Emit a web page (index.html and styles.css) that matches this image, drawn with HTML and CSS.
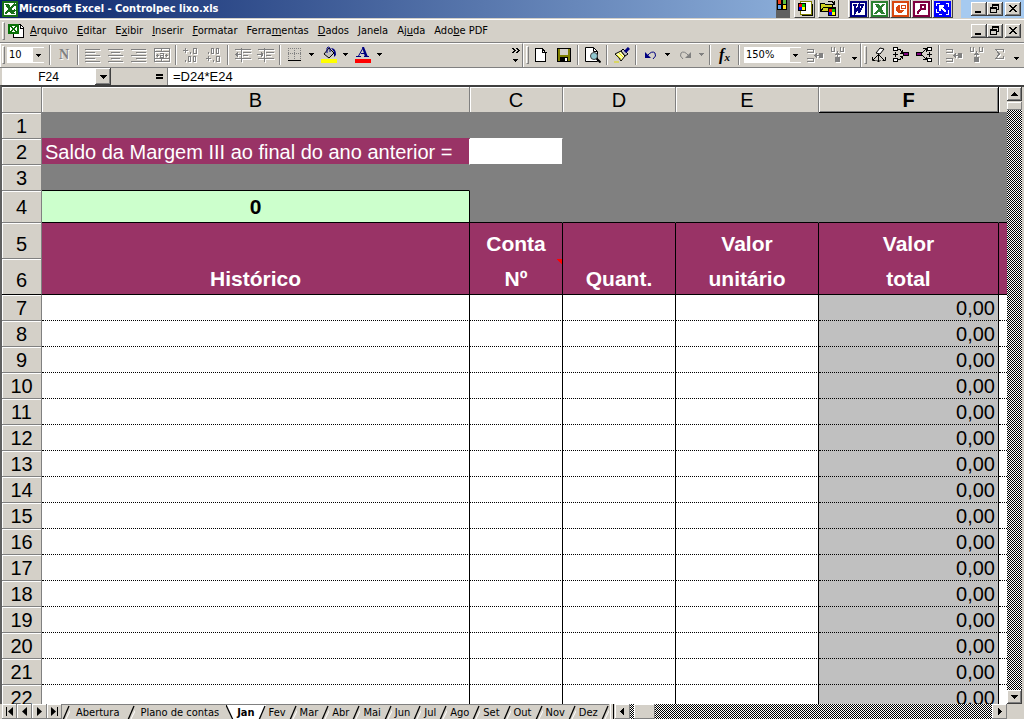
FILE: index.html
```html
<!DOCTYPE html>
<html lang="pt">
<head>
<meta charset="utf-8">
<title>Microsoft Excel - Controlpec lixo.xls</title>
<link rel="stylesheet" href="styles.css">
</head>
<body>
<svg class="defs" aria-hidden="true">
  <defs>
    <symbol id="down" viewBox="0 0 5 3"><path d="M0 0h5v1h-5zM1 1h3v1h-3zM2 2h1v1h-1z"/></symbol>
    <symbol id="min" viewBox="0 0 16 14"><path d="M4 9h6v2h-6z"/></symbol>
    <symbol id="restore" viewBox="0 0 16 14"><path d="M5 2h7v6h-2v-1h1v-3h-5v1h-1zM3 5h7v6h-7zM4 7v3h5v-3z" fill-rule="evenodd"/></symbol>
    <symbol id="close" viewBox="0 0 16 14"><path d="M4 3h2v1h1v1h2v-1h1v-1h2v1h-1v1h-1v1h-1v1h1v1h1v1h1v1h-2v-1h-1v-1h-2v1h-1v1h-2v-1h1v-1h1v-1h1v-1h-1v-1h-1v-1h-1z"/></symbol>
    <symbol id="slash" viewBox="0 0 8 15"><path d="M0 15V14L7 0H8V15Z" fill="#d4d0c8"/><path d="M3 15L8 5V15z" fill="#fff"/><path d="M1 15L7 1" stroke="#000" stroke-width="1.300" fill="none"/><path d="M4 15L8 7V15z" fill="#d4d0c8"/></symbol>
    <symbol id="ungroup" viewBox="0 0 18 16"><path d="M1 2.500h6v3h-6M1 11.500h6v3h-6M8 8.500h6M9.500 7v3M10.500 6v5" fill="none" stroke="#808080"/><path d="M13 6h4v5h-4z" fill="#808080"/></symbol>
    <symbol id="grouprow" viewBox="0 0 16 16"><path d="M1.500 0v4h3v-4M10.500 0v4h3v-4M7.500 4v6M6 6.500h3M5 7.500h5" fill="none" stroke="#808080"/><path d="M5 10h5v5h-5z" fill="#808080"/></symbol>
  </defs>
</svg>
<div class="app">
  <header class="title">
    <svg class="logo" width="16" height="16"><path d="M0 0h16v16h-16z" fill="#187018"/><path d="M2 2h12v12h-12z" fill="#fff"/><path d="M3 3h4l6 10h-4z" fill="#187018"/><path d="M13 3L3 13M9 13l4-4M13 3v2" stroke="#187018" stroke-width="2"/></svg>
    <h1>Microsoft Excel - Controlpec lixo.xls</h1>
    <div class="officebar">
      <svg class="flag" width="14" height="18"><path d="M0 0h14v18h-14z" fill="#606060"/><path d="M1 0h10v10h-10z" fill="#000"/><path d="M2 0h3v4h-3z" fill="#f04020"/><path d="M7 0h3v4h-3z" fill="#60c040"/><path d="M2 5h3v4h-3z" fill="#60a0f0"/><path d="M7 5h3v4h-3z" fill="#ffe020"/></svg>
      <button class="ob" aria-label="Novo documento"><svg width="20" height="17"><path d="M5.500 1.500h11v13h-11z" fill="#fff" stroke="#808000"/><path d="M7 15.500h10v-12" stroke="#000" fill="none"/><path d="M3 3h8v8h-8z" fill="#000"/><path d="M4 4h3v3h-3z" fill="#f00"/><path d="M7 4h3v3h-3z" fill="#0c0"/><path d="M4 7h3v3h-3z" fill="#00f"/><path d="M7 7h3v3h-3z" fill="#ff0"/></svg></button>
      <button class="ob" aria-label="Abrir documento"><svg width="20" height="17"><path d="M1.500 11.500v-8h4l1 1h7v3M1.500 11.500l3-4h12l-3 4z" fill="#d0d020" stroke="#000"/><path d="M9 1.500h4l2 2M15.500 1v3h-3" stroke="#000" fill="none"/><path d="M9 8h8v8h-8z" fill="#000"/><path d="M10 9h3v3h-3z" fill="#f00"/><path d="M13 9h3v3h-3z" fill="#0c0"/><path d="M10 12h3v3h-3z" fill="#00f"/><path d="M13 12h3v3h-3z" fill="#ff0"/></svg></button>
      <i class="obgap"></i>
      <button class="ob" aria-label="Word"><svg width="17" height="16"><path d="M0 0h17v16h-17z" fill="#000080"/><path d="M2 2h13v12h-13z" fill="#fff"/><path d="M3 4h4M8 4h6M5 4v8l4-7v7l4-8" stroke="#000080" stroke-width="2" fill="none"/></svg></button>
      <button class="ob" aria-label="Excel"><svg width="17" height="16"><path d="M0 0h17v16h-17z" fill="#2c8030"/><path d="M2 2h13v12h-13z" fill="#fff"/><path d="M4 3h4l6 10h-4z" fill="#2c8030"/><path d="M13 3L4 13" stroke="#2c8030" stroke-width="2"/></svg></button>
      <button class="ob" aria-label="PowerPoint"><svg width="17" height="16"><path d="M0 0h17v16h-17z" fill="#d84810"/><path d="M2 2h13v12h-13z" fill="#fff"/><path d="M8 4a4 4 0 1 0 4 5h-4z" fill="#d84810"/><path d="M9 4h4v3h-4z" fill="none" stroke="#d84810"/></svg></button>
      <button class="ob" aria-label="Access"><svg width="17" height="16"><path d="M0 0h17v16h-17z" fill="#800040"/><path d="M2 2h13v12h-13z" fill="#fff"/><circle cx="10" cy="6" r="2.500" fill="none" stroke="#800040" stroke-width="2"/><path d="M8 8l-4 4M4 12h2" stroke="#800040" stroke-width="2"/></svg></button>
      <button class="ob" aria-label="Atalho"><svg width="17" height="16"><path d="M0 0h17v16h-17z" fill="#00f"/><path d="M5 4h5v2h-1l3 4-1 1-4-3v2h-2z" fill="#fff"/><path d="M2.500 5v-3h3M12 2.500h2.500v3M14.500 9v4h-3M8 13.500h-3M2.500 8v3.500h2" stroke="#fff" fill="none"/></svg></button>
    </div>
    <div class="winbtns">
      <button aria-label="Minimizar"><svg width="16" height="14"><use href="#min"/></svg></button><button aria-label="Restaurar"><svg width="16" height="14"><use href="#restore"/></svg></button><button class="x" aria-label="Fechar"><svg width="16" height="14"><use href="#close"/></svg></button>
    </div>
  </header>

  <nav class="menu">
    <i class="grip"></i>
    <svg class="doc" width="18" height="16"><path d="M5.500 1.500h7l3 3v10h-10z" fill="#fff" stroke="#000"/><path d="M12.500 1v4h3" fill="none" stroke="#000"/><path d="M0 1h11v10h-11z" fill="#087008"/><path d="M2 3h7v6h-7z" fill="#fff"/><path d="M2.500 3l6 6M8.500 3l-6 6" stroke="#087008" stroke-width="2"/></svg>
    <button><u>A</u>rquivo</button><button><u>E</u>ditar</button><button>E<u>x</u>ibir</button><button><u>I</u>nserir</button><button><u>F</u>ormatar</button><button>Ferra<u>m</u>entas</button><button><u>D</u>ados</button><button><u>J</u>anela</button><button>Aj<u>u</u>da</button><button>Ado<u>b</u>e PDF</button>
    <div class="winbtns">
      <button aria-label="Minimizar pasta"><svg width="16" height="14"><use href="#min"/></svg></button><button aria-label="Restaurar pasta"><svg width="16" height="14"><use href="#restore"/></svg></button><button class="x" aria-label="Fechar pasta"><svg width="16" height="14"><use href="#close"/></svg></button>
    </div>
  </nav>

  <div class="bars">
    <div class="bar grow">
      <i class="grip"></i>
      <label class="combo size"><select aria-label="Tamanho da fonte"><option>10</option></select><svg width="5" height="3"><use href="#down"/></svg></label>
      <i class="sep"></i>
      <button class="tb bold" aria-label="Negrito">N</button>
      <i class="sep"></i>
      <button class="tb" aria-label="Alinhar à esquerda"><svg class="dis" width="16" height="16"><path d="M0 2.500h15M0 5.500h10M0 8.500h15M0 11.500h10M0 14.500h15"/></svg></button>
      <button class="tb" aria-label="Centralizar"><svg class="dis" width="16" height="16"><path d="M0 2.500h15M3 5.500h9M0 8.500h15M3 11.500h9M0 14.500h15"/></svg></button>
      <button class="tb" aria-label="Alinhar à direita"><svg class="dis" width="16" height="16"><path d="M0 2.500h15M5 5.500h10M0 8.500h15M5 11.500h10M0 14.500h15"/></svg></button>
      <button class="tb" aria-label="Mesclar e centralizar"><svg class="dis" width="16" height="16"><path d="M.500 1.500h15v13h-15zM0 4.500h16M0 11.500h16M7.500 1v3M7.500 12v3M2 8.500h3M11 8.500h3M3.500 7v3M12.500 7v3M6 6.500h3v4h-3v-2h3"/></svg></button>
      <i class="sep"></i>
      <button class="tb" aria-label="Aumentar casas decimais"><svg class="dis" width="18" height="16"><path d="M1 3.500h5M3.500 1v5M8.500 7v-2M11.500 1.500h3v5h-3zM3.500 15v-2M6.500 9.500h2v5h-2zM11.500 9.500h2v5h-2z"/></svg></button>
      <button class="tb" aria-label="Diminuir casas decimais"><svg class="dis" width="18" height="16"><path d="M3.500 7v-2M6.500 1.500h2v5h-2zM11.500 1.500h2v5h-2zM1 11.500h5M3.500 9v5M8.500 15v-2M11.500 9.500h3v5h-3z"/></svg></button>
      <i class="sep"></i>
      <button class="tb" aria-label="Diminuir recuo"><svg class="dis" width="18" height="16"><path d="M1 2.500h16M9 5.500h8M9 8.500h5M1 11.500h16M7.500 1v14M1 7.500h6M3.500 5v5M2.500 6v3"/></svg></button>
      <button class="tb" aria-label="Aumentar recuo"><svg class="dis" width="18" height="16"><path d="M1 2.500h16M9 5.500h8M9 8.500h5M1 11.500h16M7.500 1v14M0 7.500h6M4.500 5v5M5.500 6v3"/></svg></button>
      <i class="sep"></i>
      <button class="tb" aria-label="Bordas"><svg width="14" height="15"><path d="M.500 1v11M6.500 1v11M12.500 1v11M0 1.500h14M0 6.500h14" stroke="#808080" stroke-dasharray="1 1"/><path d="M0 13h13v1h-13z"/></svg></button>
      <button class="arrow" aria-label="Opções de bordas"><svg width="5" height="3"><use href="#down"/></svg></button>
      <button class="tb" aria-label="Cor do preenchimento"><svg width="16" height="17" class="smooth"><path d="M8 2l5 5-5 5-5-4z" fill="#c0c0c0" stroke="#000"/><path d="M6 7V2q1-2 3 0v4" stroke="#000080" fill="none"/><path d="M10 2q5 0 5 7l-2 2v-5z" fill="#000080"/><path d="M0 13h16v4h-16z" fill="#ff0"/></svg></button>
      <button class="arrow" aria-label="Opções de preenchimento"><svg width="5" height="3"><use href="#down"/></svg></button>
      <button class="tb" aria-label="Cor da fonte"><svg width="16" height="17" class="smooth"><path d="M1 10.500h5M9 10.500h5M3.500 10L8 2" stroke="#000080" fill="none"/><path d="M7 1h2l4 10h-3zM6 7h5v1h-5z" fill="#000080"/><path d="M0 13h16v4h-16z" fill="red"/></svg></button>
      <button class="arrow" aria-label="Opções de cor da fonte"><svg width="5" height="3"><use href="#down"/></svg></button>
      <button class="more" aria-label="Mais botões"><svg width="9" height="14"><path d="M0 0h2v1h1v1h1v1h-1v1h-1v1h-2v-1h1v-1h1v-1h-1v-1h-1zM4 0h2v1h1v1h1v1h-1v1h-1v1h-2v-1h1v-1h1v-1h-1v-1h-1zM1 11h5v1h-5zM2 12h3v1h-3zM3 13h1v1h-1z"/></svg></button>
    </div>
    <div class="bar">
      <i class="grip"></i>
      <button class="tb" aria-label="Novo"><svg width="12" height="14"><path d="M.500 .500h7l3 4v9h-10z" fill="#fff" stroke="#000"/><path d="M7.500 0v4.500h4" fill="none" stroke="#000"/></svg></button>
      <button class="tb" aria-label="Salvar"><svg width="14" height="14"><path d="M.500 .500h13v13h-13z" fill="#808000" stroke="#000"/><path d="M3 1h8v6h-8z" fill="#d4d0c8"/><path d="M3 9h8v5h-8z"/><path d="M8 10h2v3h-2z" fill="#fff"/></svg></button>
      <i class="sep"></i>
      <button class="tb" aria-label="Visualizar impressão"><svg width="16" height="16" class="smooth"><path d="M.500 .500h8l4 4v10h-12z" fill="#fff" stroke="#000"/><path d="M8.500 .500v4h4" fill="none" stroke="#000"/><circle cx="9" cy="9" r="3.500" fill="#90c8d0" stroke="#404040"/><path d="M11.500 11.500l4 4" stroke="#000" stroke-width="2"/></svg></button>
      <i class="sep"></i>
      <button class="tb" aria-label="Pincel"><svg width="16" height="16" class="smooth"><path d="M1 7l6-3 4 5-4 5q-2-4-6-7z" fill="#ffffb0" stroke="#000"/><path d="M7 4l2-2 5 5-3 2z" fill="#c0c0c0" stroke="#000"/><path d="M11 5l4-4" stroke="#000080" stroke-width="3"/><path d="M3 8l4 4M5 6l4 4M0 15h5" stroke="#dd0" /></svg></button>
      <i class="sep"></i>
      <button class="tb" aria-label="Desfazer"><svg width="14" height="10" class="smooth"><path d="M1 2v6h6z" fill="#000080"/><path d="M3 6Q8 0 11 3q2 3-2 6" fill="none" stroke="#000080"/></svg></button>
      <button class="arrow" aria-label="Lista de desfazer"><svg width="5" height="3"><use href="#down"/></svg></button>
      <button class="tb" aria-label="Refazer"><svg width="14" height="10" class="smooth"><path d="M13 2v6h-6z" fill="#808080"/><path d="M11 6Q6 0 3 3q-2 3 2 6" fill="none" stroke="#808080"/></svg></button>
      <button class="arrow off" aria-label="Lista de refazer"><svg width="5" height="3"><use href="#down"/></svg></button>
      <i class="sep"></i>
      <button class="tb fx" aria-label="Colar função">f<small>x</small></button>
      <i class="sep"></i>
      <label class="combo zoom"><select aria-label="Zoom"><option>150%</option></select><svg width="5" height="3"><use href="#down"/></svg></label>
      <button class="tb" aria-label="Agrupar linhas"><svg class="lit" width="18" height="16"><use href="#ungroup"/></svg></button>
      <button class="tb" aria-label="Agrupar colunas"><svg class="lit" width="16" height="16"><use href="#grouprow"/></svg></button>
      <button class="arrow low" aria-label="Opções da barra padrão"><svg width="5" height="3"><use href="#down"/></svg></button>
    </div>
    <div class="bar">
      <i class="grip"></i>
      <button class="tb" aria-label="Remover setas"><svg width="16" height="16" class="smooth"><path d="M5 6l4-5 4 1-4 5z" fill="#fff" stroke="#000"/><path d="M7.500 7v8M7 8l-5 5M8 8l5 5M1.500 10v3.500h3M14.500 10v3.500h-3M5.500 13l2 2 2-2" fill="none" stroke="#000"/></svg></button>
      <button class="tb" aria-label="Rastrear precedentes"><svg width="17" height="16"><path d="M.500 .500h4v3h-4zM.500 11.500h4v3h-4z" fill="#fff" stroke="#000"/><path d="M0 7.500h5M2.500 5v5M5 2.500h2l2 3M9.500 3v3h-3M5 12.500h2l2-3M9.500 12v-3h-3" fill="none" stroke="#000"/><path d="M10.500 5.500h5v3h-5z" fill="#800080" stroke="#000"/></svg></button>
      <button class="tb" aria-label="Rastrear dependentes"><svg width="17" height="16"><path d="M11.500 .500h4v3h-4zM11.500 11.500h4v3h-4z" fill="#fff" stroke="#000"/><path d="M11 7.500h5M13.500 5v5M6 6l4-4M7 1.500h3v3M6 8l4 4M7 12.500h3v-3" fill="none" stroke="#000"/><path d="M.500 5.500h5v3h-5z" fill="#800080" stroke="#000"/></svg></button>
      <i class="sep"></i>
      <button class="tb" aria-label="Agrupar"><svg class="lit" width="18" height="16"><use href="#ungroup"/></svg></button>
      <button class="tb" aria-label="Desagrupar"><svg class="lit" width="16" height="16"><use href="#grouprow"/></svg></button>
      <button class="tb" aria-label="AutoSoma"><svg class="dis" width="10" height="11"><path d="M8.500 3v-2.500h-8l4 4.500-4 4.500h8v-2.500"/></svg></button>
      <button class="arrow low" aria-label="Opções da barra de auditoria"><svg width="5" height="3"><use href="#down"/></svg></button>
    </div>
  </div>

  <div class="formula">
    <input class="name" aria-label="Caixa de nome" value="F24">
    <button class="sb" aria-label="Lista de nomes"><svg width="7" height="4"><path d="M0 0h7v1h-7zM1 1h5v1h-5zM2 2h3v1h-3zM3 3h1v1h-1z"/></svg></button>
    <button class="eq" aria-label="Editar fórmula"><svg width="7" height="5"><path d="M0 0h7v2h-7zM0 3h7v2h-7z"/></svg></button>
    <input class="fx-input" aria-label="Fórmula" value="=D24*E24">
  </div>

  <main class="work">
    <div class="sheet">
      <table>
        <colgroup><col class="c-n"><col><col class="c-c"><col class="c-d"><col class="c-e"><col class="c-f"><col class="c-g"></colgroup>
        <thead><tr><th></th><th>B</th><th>C</th><th>D</th><th>E</th><th class="on">F</th><th></th></tr></thead>
        <tbody>
          <tr class="gray"><th>1</th><td class="u-m"></td><td class="u-w"></td><td></td><td></td><td></td><td></td></tr>
          <tr class="gray"><th>2</th><td class="saldo">Saldo da Margem III ao final do ano anterior =</td><td class="white"></td><td></td><td></td><td></td><td></td></tr>
          <tr class="gray"><th>3</th><td class="u-k"></td><td></td><td></td><td></td><td></td><td></td></tr>
          <tr class="gray r4"><th>4</th><td class="total">0</td><td></td><td></td><td></td><td></td><td></td></tr>
          <tr class="head"><th>5</th><td></td><td>Conta</td><td></td><td>Valor</td><td>Valor</td><td></td></tr>
          <tr class="head last"><th>6</th><td>Histórico</td><td class="note">Nº</td><td>Quant.</td><td>unitário</td><td>total</td><td></td></tr>
          <tr><th>7</th><td></td><td></td><td></td><td></td><td class="v">0,00</td><td></td></tr>
          <tr><th>8</th><td></td><td></td><td></td><td></td><td class="v">0,00</td><td></td></tr>
          <tr><th>9</th><td></td><td></td><td></td><td></td><td class="v">0,00</td><td></td></tr>
          <tr><th>10</th><td></td><td></td><td></td><td></td><td class="v">0,00</td><td></td></tr>
          <tr><th>11</th><td></td><td></td><td></td><td></td><td class="v">0,00</td><td></td></tr>
          <tr><th>12</th><td></td><td></td><td></td><td></td><td class="v">0,00</td><td></td></tr>
          <tr><th>13</th><td></td><td></td><td></td><td></td><td class="v">0,00</td><td></td></tr>
          <tr><th>14</th><td></td><td></td><td></td><td></td><td class="v">0,00</td><td></td></tr>
          <tr><th>15</th><td></td><td></td><td></td><td></td><td class="v">0,00</td><td></td></tr>
          <tr><th>16</th><td></td><td></td><td></td><td></td><td class="v">0,00</td><td></td></tr>
          <tr><th>17</th><td></td><td></td><td></td><td></td><td class="v">0,00</td><td></td></tr>
          <tr><th>18</th><td></td><td></td><td></td><td></td><td class="v">0,00</td><td></td></tr>
          <tr><th>19</th><td></td><td></td><td></td><td></td><td class="v">0,00</td><td></td></tr>
          <tr><th>20</th><td></td><td></td><td></td><td></td><td class="v">0,00</td><td></td></tr>
          <tr><th>21</th><td></td><td></td><td></td><td></td><td class="v">0,00</td><td></td></tr>
          <tr><th>22</th><td></td><td></td><td></td><td></td><td class="v">0,00</td><td></td></tr>
        </tbody>
      </table>
    </div>
    <div class="vscroll">
      <button class="sb" aria-label="Rolar para cima"><svg width="7" height="4"><path d="M3 0h1v1h-1zM2 1h3v1h-3zM1 2h5v1h-5zM0 3h7v1h-7z"/></svg></button>
      <i class="thumb"></i>
      <i class="track"></i>
      <button class="sb" aria-label="Rolar para baixo"><svg width="7" height="4"><path d="M0 0h7v1h-7zM1 1h5v1h-5zM2 2h3v1h-3zM3 3h1v1h-1z"/></svg></button>
    </div>
  </main>

  <footer class="bottom">
    <button class="sb" aria-label="Primeira planilha"><svg width="7" height="9"><path d="M0 0h1v9h-1zM7 0v9L2 4.500z"/></svg></button>
    <button class="sb" aria-label="Planilha anterior"><svg width="5" height="9"><path d="M5 0v9L0 4.500z"/></svg></button>
    <button class="sb" aria-label="Próxima planilha"><svg width="5" height="9"><path d="M0 0v9L5 4.500z"/></svg></button>
    <button class="sb" aria-label="Última planilha"><svg width="7" height="9"><path d="M6 0h1v9h-1zM0 0v9L5 4.500z"/></svg></button>
    <div class="tabs">
      <svg class="sl" width="8" height="15"><use href="#slash"/></svg><button class="wide">Abertura</button>
      <svg class="sl" width="8" height="15"><use href="#slash"/></svg><button class="wide">Plano de contas</button>
      <svg class="sl act" width="8" height="15"><path d="M0 0v15h6z" fill="#d4d0c8"/><path d="M0 0L7 15" stroke="#000" stroke-width="1.300"/></svg><button class="act">Jan</button>
      <svg class="sl act" width="8" height="15"><path d="M1 15L8 1V15z" fill="#d4d0c8"/><path d="M1 15L7 1" stroke="#000" stroke-width="1.300"/></svg><button>Fev</button>
      <svg class="sl" width="8" height="15"><use href="#slash"/></svg><button>Mar</button>
      <svg class="sl" width="8" height="15"><use href="#slash"/></svg><button>Abr</button>
      <svg class="sl" width="8" height="15"><use href="#slash"/></svg><button>Mai</button>
      <svg class="sl" width="8" height="15"><use href="#slash"/></svg><button>Jun</button>
      <svg class="sl" width="8" height="15"><use href="#slash"/></svg><button>Jul</button>
      <svg class="sl" width="8" height="15"><use href="#slash"/></svg><button>Ago</button>
      <svg class="sl" width="8" height="15"><use href="#slash"/></svg><button>Set</button>
      <svg class="sl" width="8" height="15"><use href="#slash"/></svg><button>Out</button>
      <svg class="sl" width="8" height="15"><use href="#slash"/></svg><button>Nov</button>
      <svg class="sl" width="8" height="15"><use href="#slash"/></svg><button>Dez</button>
      <svg class="sl" width="8" height="15"><use href="#slash"/></svg>
    </div>
    <i class="split"></i>
    <div class="hscroll">
      <button class="sb" aria-label="Rolar para a esquerda"><svg width="4" height="7"><path d="M3 0h1v7h-1zM2 1h1v5h-1zM1 2h1v3h-1zM0 3h1v1h-1z"/></svg></button>
      <i class="gap"></i><i class="thumb"></i><i class="track"></i>
      <button class="sb" aria-label="Rolar para a direita"><svg width="4" height="7"><path d="M0 0h1v7h-1zM1 1h1v5h-1zM2 2h1v3h-1zM3 3h1v1h-1z"/></svg></button>
    </div>
    <i class="corner"></i>
  </footer>
</div>
</body>
</html>
```
FILE: styles.css
```css
* { box-sizing: border-box; }
:root {
  --face: #d4d0c8;
  --plum: #993366;
  --ui: "DejaVu Sans Condensed", "DejaVu Sans", sans-serif;
  --dither: repeating-conic-gradient(#000 0 25%, #fff 0 50%) 0 0 / 2px 2px;
}
body { margin: 0; overflow: hidden; background: var(--face); font: 11px/14px var(--ui); color: #000; }
button, input, select { font: inherit; color: inherit; margin: 0; padding: 0; border: 0; border-radius: 0; background: none; outline: 0; }
button { display: flex; align-items: center; justify-content: center; flex: none; white-space: nowrap; }
svg { display: block; flex: none; shape-rendering: crispEdges; }
svg.smooth, svg.sl { shape-rendering: auto; }
i { display: block; flex: none; }
.defs { position: absolute; width: 0; height: 0; }
.app { display: flex; flex-direction: column; height: 100vh; }

.title { display: flex; align-items: center; flex: none; height: 18px; padding: 0 3px 0 2px; background: linear-gradient(90deg, #0a246a, #a6caf0 94%); }
.title h1 { flex: 1; margin: 0 0 0 1px; font: bold 11px/18px var(--ui); color: #fff; white-space: nowrap; }
.officebar { display: flex; align-self: stretch; margin-right: 10px; padding-right: 8px; background: var(--face); }
.flag { margin-right: 4px; }
.ob { width: 21px; height: 18px; border-right: 1px solid #404040; border-bottom: 1px solid #404040; border-left: 1px solid #fff; }
.ob:nth-of-type(2) { margin-left: 3px; }
.obgap { width: 9px; }
.winbtns { display: flex; }
.winbtns button { width: 16px; height: 14px; background: var(--face); box-shadow: inset -1px -1px #404040, inset 1px 1px #fff, inset -2px -2px #808080; }
.winbtns .x { margin-left: 2px; }

.menu { display: flex; align-items: center; flex: none; height: 24px; margin-top: 1px; padding: 0 3px 0 2px; border-top: 1px solid #fff; border-bottom: 1px solid #808080; }
.grip { width: 3px; height: 18px; border: 1px solid; border-color: #fff #808080 #808080 #fff; }
.doc { margin: 0 0 0 3px; }
.menu > button { padding: 0 4px 0 5px; display: block; }
.menu > button:first-of-type { padding-left: 4px; }
.menu .winbtns { margin-left: auto; }

.bars { display: flex; flex: none; height: 25px; border-bottom: 1px solid #808080; }
.bar { display: flex; align-items: center; padding: 0 0 2px 2px; border-top: 1px solid #fff; border-left: 1px solid #fff; border-right: 1px solid #808080; }
.bar:first-child { padding-left: 1px; }
.bar:last-child { border-right: 0; padding-right: 2px; }
.grow { flex: 1; }
.combo { display: flex; align-items: center; height: 16px; background: #fff; flex: none; position: relative; }
.combo select { appearance: none; flex: 1; min-width: 0; height: 16px; padding-left: 2px; }
.combo svg { position: absolute; right: 0; top: 1px; box-sizing: content-box; padding: 6px 3px 5px; background: var(--face); pointer-events: none; }
.size { width: 37px; margin: 0 3px 0 2px; }
.zoom { width: 57px; margin: 0 2px; }
.sep { width: 6px; height: 20px; background: linear-gradient(90deg, #0000 2px, #808080 2px 3px, #fff 3px 4px, #0000 4px); }
.tb { width: 23px; height: 20px; }
.arrow { width: 11px; height: 20px; }
.arrow.low { padding-top: 8px; }
.off svg { fill: #808080; }
.more { margin-left: auto; width: 12px; height: 20px; }
.dis { fill: none; stroke: #808080; filter: drop-shadow(1px 1px 0 #fff); }
.lit { filter: drop-shadow(1px 1px 0 #fff); }
.bold { width: 22px; font: bold 14px "Liberation Serif", serif; color: #808080; text-shadow: 1px 1px #fff; }
.fx { font: italic bold 16px/16px "Liberation Serif", serif; }
.fx small { font-size: 11px; padding-top: 4px; }

.formula { display: flex; flex: none; height: 17px; font: 13px/16px "Liberation Sans", sans-serif; }
.name { width: 93px; margin-left: 2px; background: #fff; text-align: center; font-size: 12px; }
.sb { background: var(--face); box-shadow: inset -1px -1px #404040, inset 1px 1px #fff, inset -2px -2px #808080; }
.formula .sb { width: 16px; }
.eq { width: 57px; justify-content: flex-end; padding-right: 4px; border-right: 1px solid #808080; }
.fx-input { flex: 1; min-width: 0; padding-left: 5px; background: #fff; }

.work { display: flex; flex: 1; min-height: 0; border-top: 2px solid #404040; border-left: 2px solid #606060; }
.sheet { flex: 1; min-width: 0; overflow: hidden; background: #fff; }
table { width: 100%; table-layout: fixed; border-collapse: separate; border-spacing: 0; font: 20px/24px "Liberation Sans", sans-serif; }
.c-n { width: 40px; } .c-c { width: 93px; } .c-d { width: 113px; } .c-e { width: 143px; } .c-f { width: 180px; } .c-g { width: 8px; }
th, td { padding: 0; text-align: center; white-space: nowrap; overflow: hidden; }
th { font-weight: normal; background: var(--face); border-right: 1px solid #808080; border-bottom: 1px solid #808080; box-shadow: inset 1px 1px #fff; }
thead th { height: 26px; }
thead th:last-child { border-right: 0; }
thead .on { font-weight: bold; border-color: #000; box-shadow: inset 1px 1px #fff, inset -1px -1px #808080; }
tbody tr { height: 26px; }
td { border-right: 1px solid #000; border-bottom: 1px dotted #000; }
td:last-child { border-right: 0; }
.gray td { background: #808080; border-color: #808080; border-bottom-style: solid; }
.gray .u-m { border-bottom-color: var(--plum); }
.gray .u-w { border-bottom-color: #fff; }
.gray .u-k { border-color: #808080 #808080 #000; }
.gray .saldo { background: var(--plum); color: #fff; text-align: left; padding-left: 3px; border-right-color: #fff; }
.gray .white { background: #fff; }
tbody .r4 { height: 32px; }
.r4 td { border-bottom-color: #000; }
.gray .total { background: #ccffcc; border-color: #000; font-size: 21px; font-weight: bold; }
tbody .head { height: 36px; }
.head td { background: var(--plum); color: #fff; font-size: 21px; line-height: 30px; font-weight: bold; vertical-align: bottom; border-bottom: 0; }
.head th { vertical-align: bottom; line-height: 28px; }
.last th, .last td { border-bottom: 1px solid #000; }
.head .note { background: linear-gradient(225deg, red 4px, #0000 4px) var(--plum); }
.v { background: #c0c0c0; text-align: right; padding-right: 3px; }

.vscroll { display: flex; flex-direction: column; width: 17px; border-right: 2px solid var(--face); }
.vscroll .sb { width: 15px; height: 14px; }
.vscroll .thumb { height: 8px; margin-top: 1px; }
.thumb { background: var(--face); box-shadow: inset -1px -1px #808080, inset 1px 1px #fff; }
.track { flex: 1; background: var(--dither); }

.bottom { display: flex; flex: none; height: 15px; padding-left: 2px; }
.bottom .sb { width: 15px; height: 15px; box-shadow: inset -1px -1px #808080, inset 1px 1px #fff; }
.bottom .sb svg { shape-rendering: auto; }
.tabs { display: flex; border-top: 1px solid #808080; overflow: hidden; }
.tabs button { padding: 0 3px; height: 15px; background: var(--face); }
.tabs .wide { padding: 0 7px 0 6px; }
.tabs .act { background: #fff; }
.tabs button.act { font-weight: bold; padding: 0 3px; }
.split { width: 4px; margin: 0 1px; background: var(--face); border-left: 1px solid #fff; border-right: 1px solid #000; }
.hscroll { display: flex; flex: 1; }
.hscroll .thumb { width: 21px; }
.gap { width: 4px; background: var(--dither); }
.corner { width: 17px; }
```
